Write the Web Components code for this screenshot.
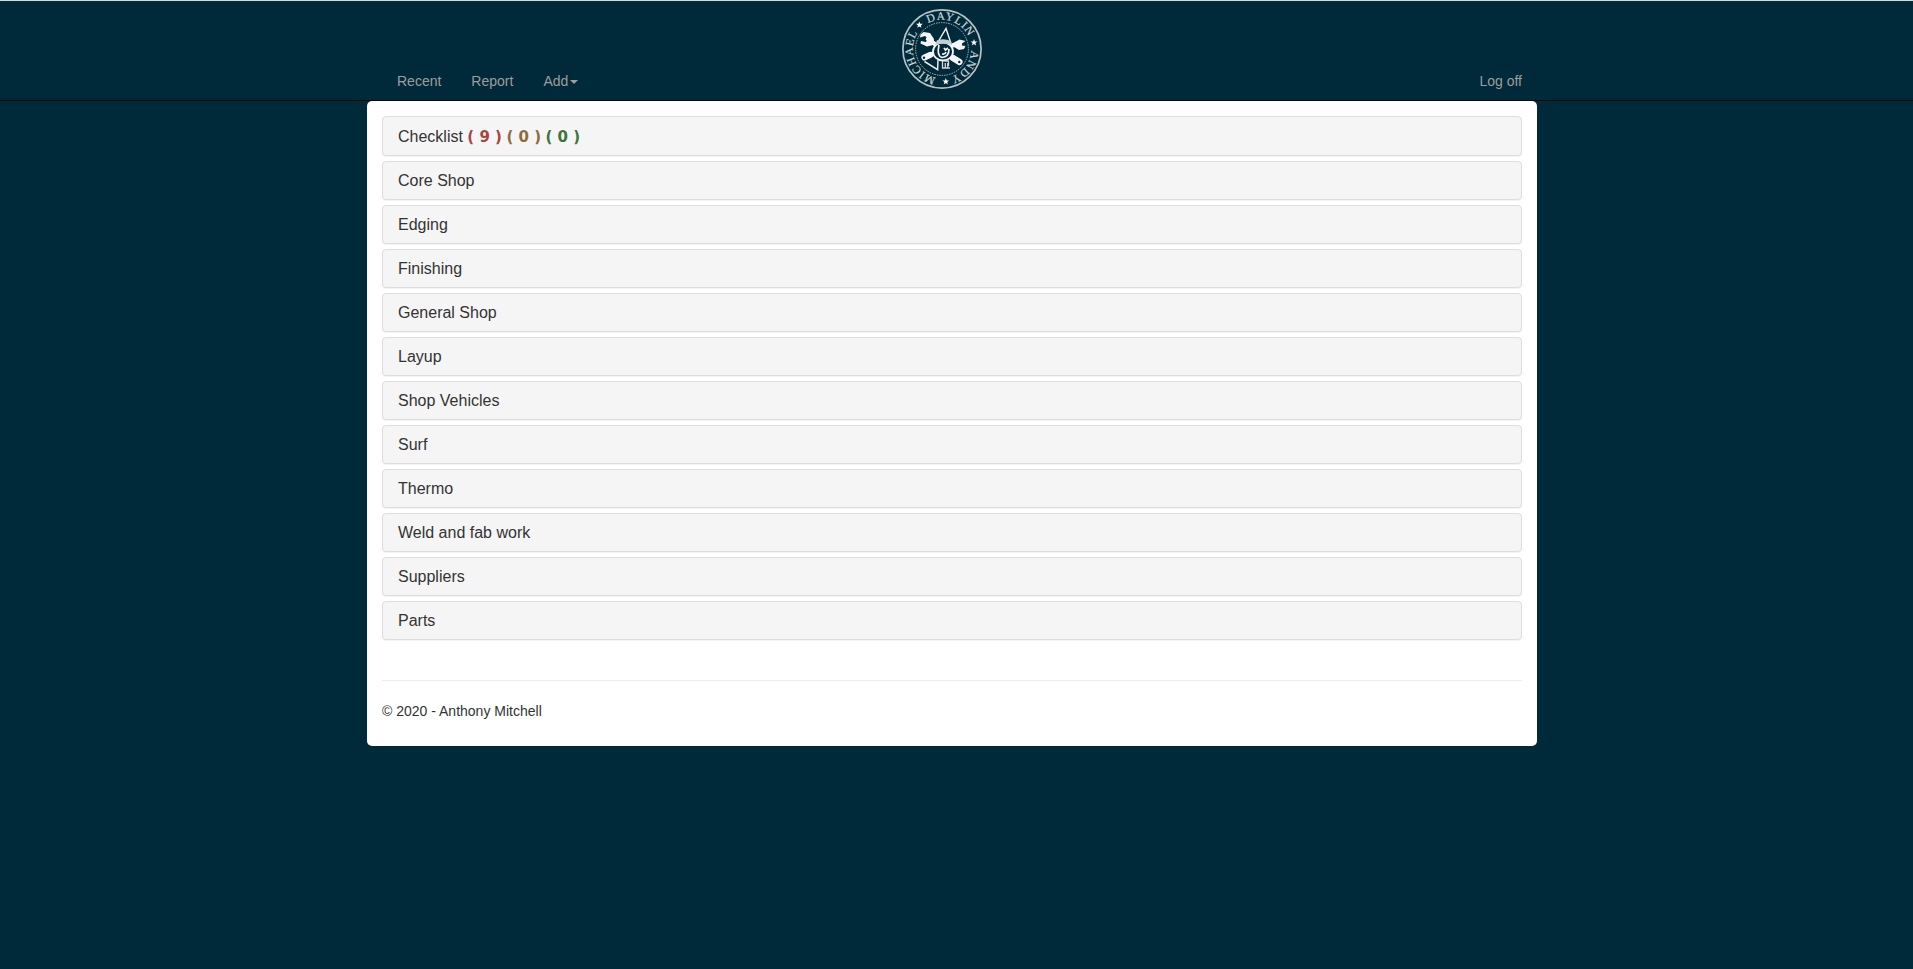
<!DOCTYPE html>
<html lang="en">
<head>
<meta charset="utf-8">
<title>Checklist</title>
<style>
html{height:100%}
body{margin:0;min-height:100%;box-sizing:border-box;background:#002a3a;border-top:1px solid #d5dbdd;font:14px/20px "Liberation Sans",Arial,sans-serif;color:#333}
</style>
</head>
<body>
<site-navbar>
  <nav-link>Recent</nav-link><nav-link>Report</nav-link><nav-link caret>Add</nav-link>
  <shop-logo slot="logo"></shop-logo>
  <nav-link slot="end">Log off</nav-link>
</site-navbar>
<page-body>
  <panel-row first>Checklist <status-count style="color:#a94442">( 9 )</status-count> <status-count style="color:#8a6d3b">( 0 )</status-count> <status-count style="color:#3c763d">( 0 )</status-count></panel-row>
  <panel-row>Core Shop</panel-row>
  <panel-row>Edging</panel-row>
  <panel-row>Finishing</panel-row>
  <panel-row>General Shop</panel-row>
  <panel-row>Layup</panel-row>
  <panel-row>Shop Vehicles</panel-row>
  <panel-row>Surf</panel-row>
  <panel-row>Thermo</panel-row>
  <panel-row>Weld and fab work</panel-row>
  <panel-row>Suppliers</panel-row>
  <panel-row>Parts</panel-row>
  <span slot="footer">© 2020 - Anthony Mitchell</span>
</page-body>
<script>
function define(name, html) {
  customElements.define(name, class extends HTMLElement {
    constructor() { super(); this.attachShadow({mode: 'open'}).innerHTML = html; }
  });
}
define('site-navbar', `<style>
:host{display:block;height:99px;border-bottom:1px solid #080808}
.in{width:1170px;height:99px;margin-left:367px;display:grid;grid-template-columns:534.5px 1fr auto}
.links{display:flex;align-items:flex-end;padding-left:15px}
.end{display:flex;align-items:flex-end}
.logo{padding-top:8px;line-height:0}
</style><div class="in"><div class="links"><slot></slot></div><div class="logo"><slot name="logo"></slot></div><div class="end"><slot name="end"></slot></div></div>`);
define('nav-link', `<style>
:host{display:block;padding:10px 15px 9px;color:#9d9d9d;line-height:20px;white-space:nowrap}
.caret{display:none;width:0;height:0;margin-left:2px;vertical-align:middle;border-top:4px solid;border-left:4px solid transparent;border-right:4px solid transparent}
:host([caret]) .caret{display:inline-block}
</style><slot></slot><b class="caret"></b>`);
define('shop-logo', `<style>
:host{display:block;width:80px;height:80px}
text{font:11.4px "Liberation Serif",serif;fill:#d0dadd;stroke:#d0dadd;stroke-width:.15px}
svg{display:block}
</style><svg width="80" height="80" viewBox="-40 -40 80 80">
<defs><path id="ring" d="M0 29.2A29.2 29.2 0 0 1 0 -29.2A29.2 29.2 0 0 1 0 29.2"/>
<path id="top" d="M-29.2 0A29.2 29.2 0 0 1 29.2 0A29.2 29.2 0 0 1 -29.2 0"/>
<path id="star" d="M0 -3.4L.9 -1L3.400 -1L1.400 .6L2.100 3L0 1.600L-2.100 3L-1.400 .6L-3.400 -1L-.9 -1Z"/></defs>
<circle r="39.1" fill="none" stroke="#b5c2c6" stroke-width="1.7"/>
<circle r="26.4" fill="none" stroke="#a9b8bd" stroke-width="1" stroke-dasharray="1.5 1"/>
<text text-anchor="middle" letter-spacing=".9"><textPath href="#top" startOffset="55.400">DAYLIN</textPath></text>
<text text-anchor="middle" letter-spacing=".9"><textPath href="#top" startOffset="111">ANDY</textPath></text>
<text text-anchor="middle" letter-spacing=".8"><textPath href="#ring" startOffset="35">MICHAEL</textPath></text>
<g fill="#fff"><use href="#star" x="-22.6" y="-24.2"/><use href="#star" x="32" y="-6.6"/><use href="#star" x="3.8" y="32.5"/></g>
<g stroke="#f4f6f7" fill="none" stroke-linecap="round">
<path d="M-14 -10L16 12M14 -5L-17 8" stroke-width="4.4"/>
<path d="M11 9L17.5 13M-12 6L-17.5 8.5" stroke-width="6.2"/>
</g>
<g fill="#002a3a"><circle cx="-18" cy="8.8" r="1.2"/><circle cx="17.3" cy="13" r="1.2"/></g>
<path fill="#f4f6f7" d="M-18.5 -17L-12 -16L-8 -10L-9 -4L-15 -2.5L-21.5 -5.5L-21 -8L-16 -7L-14 -10.5L-17 -13L-22 -11.5L-21.5 -14.5ZM13 -7L17.5 -9.5L23.5 -8L20 -5.5L20 -3.5L23.5 -3L22 0L17 1L12 -2Z"/>
<ellipse cx="1" cy="2.5" rx="10" ry="9" fill="#002a3a" stroke="#f4f6f7" stroke-width="1.8"/>
<path d="M-4 -7L4 -20.5L8.5 -7Z" fill="#002a3a" stroke="#f4f6f7" stroke-width="1.4"/>
<path d="M-5 -8.7Q2 -11 9 -8L10 -4Q2 -7 -7 -4Z" fill="#c4ced2"/>
<path d="M-3 -4Q-5.500 7 0 8.500Q7 8 7 0M2 -1L3.500 1L6 -1M0 5Q3 5.500 4 3" fill="none" stroke="#f4f6f7" stroke-width="1.7"/>
<path d="M-17.5 12.5L-4.4 20.6L-4 10" fill="none" stroke="#e5eaec" stroke-width="1.5"/>
<path d="M.5 12v7h7.500M2.500 12h4v5M3.300 14v5M5.700 14v5" fill="none" stroke="#d1d8db" stroke-width="1.3"/>
</svg>`);
define('page-body', `<style>
:host{display:block;width:1170px;height:645px;box-sizing:border-box;margin-left:367px;background:#fff;border-radius:5px;padding:15px}
.rows{display:flex;flex-direction:column;gap:5px}
hr{height:0;border:0;border-top:1px solid #eee;margin:40px 0 20px}
footer{line-height:20px}
</style><div class="rows"><slot></slot></div><hr><footer><slot name="footer"></slot></footer>`);
define('panel-row', `<style>
:host{display:block;height:39px;box-sizing:border-box;border:1px solid #ddd;border-radius:4px;background:#f5f5f5;padding:10px 15px;font-size:16px;line-height:17px;white-space:nowrap;box-shadow:0 1px 1px rgba(0,0,0,.05)}
:host([first]){height:40px;line-height:19px}
</style><slot></slot>`);
define('status-count', `<style>:host{display:inline;font-family:"DejaVu Sans",sans-serif;font-size:15px;line-height:1;font-weight:bold}</style><slot></slot>`);
</script>
</body>
</html>
